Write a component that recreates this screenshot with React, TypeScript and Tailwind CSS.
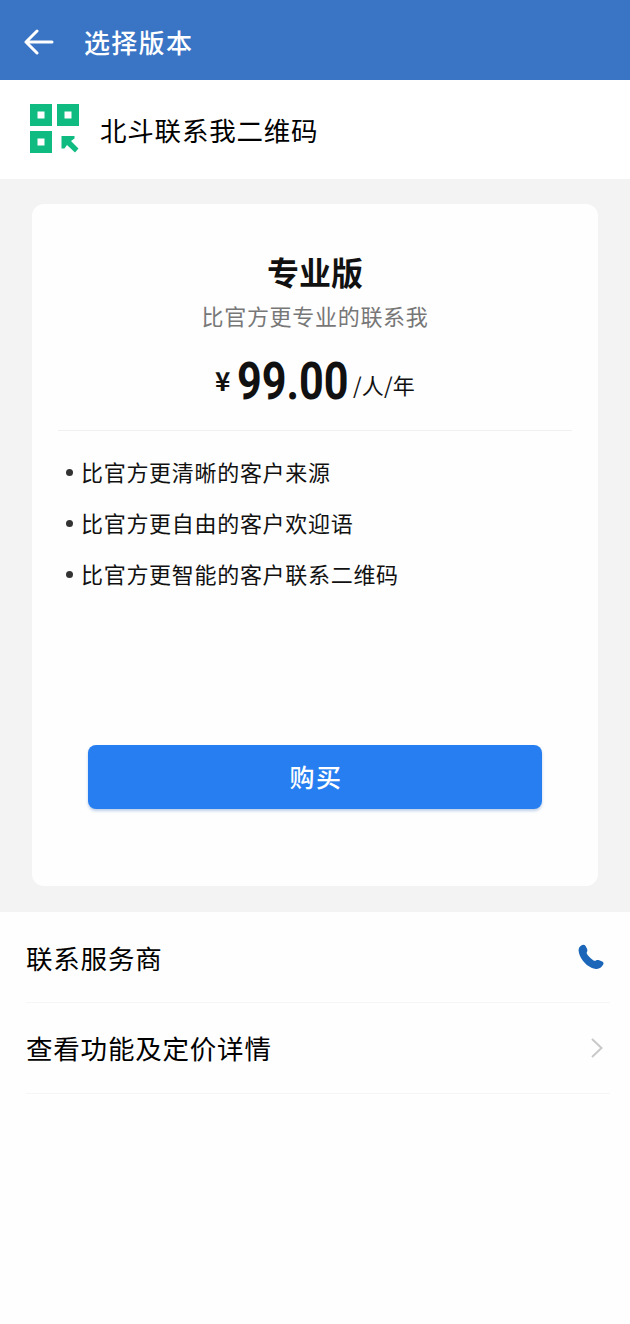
const features = [
  '比官方更清晰的客户来源',
  '比官方更自由的客户欢迎语',
  '比官方更智能的客户联系二维码',
];

function QrLogo() {
  return (
    <svg className="w-[49px] h-[49px] mb-0.5" viewBox="0 0 49 49" fill="#10bb82">
      <path fillRule="evenodd" d="M0 0h22v22H0zM7.5 7.5v7h7v-7z" />
      <path fillRule="evenodd" d="M27 0h22v22H27zM34.5 7.5v7h7v-7z" />
      <path fillRule="evenodd" d="M0 27h22v22H0zM7.5 34.5v7h7v-7z" />
      <path d="M31.5 32h13v2.5L41 37l7.5 7.5-3.5 4-8-7.5-2.500 3.500h-3z" />
    </svg>
  );
}

export default function App() {
  return (
    <div className="w-full h-[1324px] bg-[#fefefe] flex flex-col text-[#111] font-['Noto_Sans_CJK_SC',sans-serif]">
      {/* Header */}
      <header className="h-20 shrink-0 bg-[#3974c5] flex items-center pl-6 pt-1 text-white">
        <svg className="w-[30px] h-[26px] mr-[30px]" viewBox="0 0 30 26" fill="none" stroke="currentColor" strokeWidth="3" strokeLinecap="round" strokeLinejoin="round">
          <path d="M13 2L2 13l11 11M2 13h26" />
        </svg>
        <h1 className="text-[26px] leading-10 font-medium tracking-[1.3px]">选择版本</h1>
      </header>

      {/* App name */}
      <div className="h-[99px] shrink-0 bg-white flex items-center pl-[30px] gap-[21px]">
        <QrLogo />
        <span className="text-[26.5px] leading-10 tracking-[0.8px] text-black">北斗联系我二维码</span>
      </div>

      {/* Plan */}
      <div className="bg-[#f3f3f3] px-8 pt-[25px] pb-[26px]">
        <div className="h-[682px] bg-[#fefefe] rounded-xl px-[26px] pt-[47px] flex flex-col">
          <h2 className="text-[32px] leading-10 font-bold text-center">专业版</h2>
          <p className="mt-1 text-[22px] leading-10 tracking-[0.7px] text-[#777] text-center">比官方更专业的联系我</p>
          <div className="h-[90px] flex">
            <span className="w-[22px] ml-[157px] mt-[25px] text-[26px] leading-10 font-bold">¥</span>
            <span className="w-[116px] mt-[17px] text-[52px] leading-[60px] font-['Roboto',sans-serif]">
              <span className="inline-block origin-left scale-x-[0.83] font-bold">99.00</span>
            </span>
            <span className="mt-[29px] text-[22px] leading-10 tracking-[0.2px]">/人/年</span>
          </div>
          <div className="border-t border-[#f0f0f0] mt-[5px]" />
          <ul className="mt-5 pl-2 flex flex-col gap-[11px]">
            {features.map((item) => (
              <li key={item} className="flex items-center text-[22px] leading-10 tracking-[0.7px]">
                <span className="w-[7px] h-[7px] mt-0.5 mr-2 rounded-full bg-[#333]" />
                {item}
              </li>
            ))}
          </ul>
          <button className="mt-auto mb-[77px] mx-[30px] h-16 rounded-lg bg-[#267ef0] shadow-[0_2px_3px_rgba(38,100,180,0.3)] text-white text-[25px] font-medium tracking-[1.5px] pl-0.5">
            购买
          </button>
        </div>
      </div>

      {/* Links */}
      <div className="pl-[26px] pr-5">
        <div className="h-[91px] border-b border-[#f6f6f6] flex items-center justify-between pr-1.5 pt-0.5">
          <span className="text-[26.5px] leading-10 tracking-[0.8px] text-black">联系服务商</span>
          <svg className="w-[26px] h-[26px] mb-0.5" viewBox="0 0 26 26" fill="#1b66b8">
            <path d="M3.200 1.500C5 .3 6.600.6 7.600 2l1.500 3c.6 1.300.2 2.200-.3 3.200-.4 1 .2 2 1.200 3.200 1.500 1.900 3.200 3.500 5.200 4.800 1 .6 1.900.7 2.800.2 1.100-.6 2-.6 3.200-.1l3 1.200c1.300.7 1.700 1.700 1 3.100-1.500 3-4.200 4.700-7.400 4.300C12.500 24.200 8 21 4.700 16.500 2.300 13.200.8 9.700.6 6.500.5 4.200 1.500 2.600 3.200 1.500z" />
          </svg>
        </div>
        <div className="h-[91px] border-b border-[#f6f6f6] flex items-center justify-between">
          <span className="text-[26.5px] leading-10 tracking-[0.8px] text-black">查看功能及定价详情</span>
          <svg className="w-3 h-5 mr-[7px]" viewBox="0 0 12 20" fill="none" stroke="#c9c9c9" strokeWidth="2">
            <path d="M1 1l9.500 9L1 19" />
          </svg>
        </div>
      </div>
    </div>
  );
}
